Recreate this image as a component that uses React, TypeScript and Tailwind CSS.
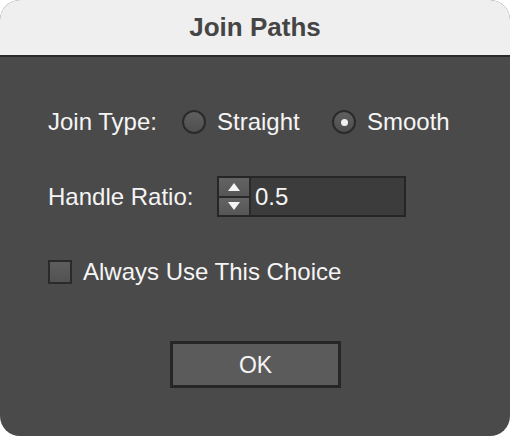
import React from "react";

const font = { fontFamily: '"Liberation Sans", Arial, sans-serif' };

function Radio({ checked }: { checked?: boolean }) {
  return (
    <div className="w-[24px] h-[24px] rounded-full border-2 border-[#2a2a2a] bg-gradient-to-b from-[#5f5f5f] to-[#4f4f4f] flex items-center justify-center shrink-0">
      {checked && <div className="w-[7px] h-[7px] rounded-full bg-[#f2f2f2]" />}
    </div>
  );
}

export default function App() {
  return (
    <div className="w-[510px] h-[436px] bg-white" style={font}>
      <div className="w-full h-full rounded-[20px] overflow-hidden flex flex-col bg-[#4a4a4a]">
        <div className="h-[55px] shrink-0 bg-[#efefef] flex items-center justify-center text-[26px] leading-[55px] font-bold text-[#454545]">
          Join Paths
        </div>
        <div className="h-[2px] shrink-0 bg-[#2a2a2a]" />
        <div className="flex flex-col pl-[48px] text-[24px] leading-[28px] text-[#f5f5f5]">
          <div className="mt-[51px] h-[28px] flex items-center">
            <span className="w-[134px] shrink-0">Join Type:</span>
            <div className="w-[150px] shrink-0 flex items-center">
              <Radio />
              <span className="ml-[11px]">Straight</span>
            </div>
            <div className="flex items-center">
              <Radio checked />
              <span className="ml-[11px]">Smooth</span>
            </div>
          </div>
          <div className="mt-[40px] h-[41px] flex items-center">
            <span className="w-[169px] shrink-0">Handle Ratio:</span>
            <div className="w-[189px] h-[41px] border-2 border-[#262626] flex">
              <div className="w-[30px] flex flex-col bg-[#5a5a5a]">
                <div className="flex-1 flex items-center justify-center bg-gradient-to-b from-[#636363] to-[#565656]">
                  <svg width="12" height="8" viewBox="0 0 12 8"><path d="M6 0 L12 8 L0 8 Z" fill="#f5f5f5" /></svg>
                </div>
                <div className="h-[2px] bg-[#2a2a2a]" />
                <div className="flex-1 flex items-center justify-center bg-gradient-to-b from-[#636363] to-[#565656]">
                  <svg width="12" height="8" viewBox="0 0 12 8"><path d="M0 0 L12 0 L6 8 Z" fill="#f5f5f5" /></svg>
                </div>
              </div>
              <div className="w-[2px] bg-[#2a2a2a]" />
              <div className="flex-1 bg-[#3c3c3c] flex items-center pl-[4px]">0.5</div>
            </div>
          </div>
          <div className="mt-[43px] h-[24px] flex items-center">
            <div className="w-[24px] h-[24px] border-2 border-[#2a2a2a] bg-gradient-to-b from-[#5e5e5e] to-[#525252] shrink-0" />
            <span className="ml-[11px]">Always Use This Choice</span>
          </div>
        </div>
        <div className="mt-[57px] flex justify-center">
          <div className="ml-[1px] w-[171px] h-[47px] border-[3px] border-[#262626] bg-[#5b5b5b] flex items-center justify-center text-[23px] leading-[28px] text-[#f5f5f5]">
            OK
          </div>
        </div>
      </div>
    </div>
  );
}
